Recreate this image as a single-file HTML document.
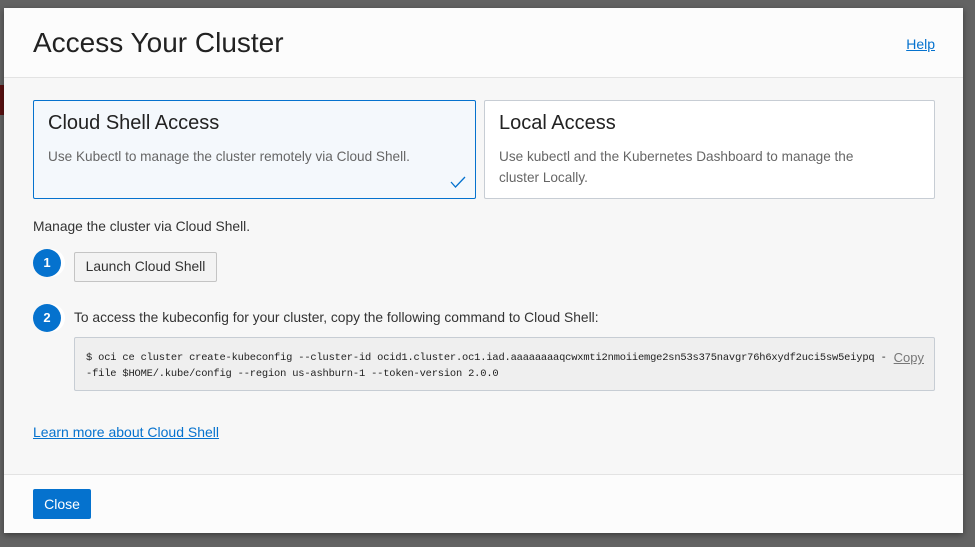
<!DOCTYPE html>
<html><head><style>
*{box-sizing:border-box;margin:0;padding:0}
body{width:975px;height:547px;background:#636363;font-family:"Liberation Sans",sans-serif;position:relative;overflow:hidden}
.bgred{position:absolute;left:0;top:85px;width:5px;height:30px;background:#5a1010}
.modal{position:absolute;left:4px;top:8px;width:959px;height:525px;background:#f7f7f7;box-shadow:0 2px 6px rgba(0,0,0,.4)}
.hdr{height:70px;background:#fcfcfc;border-bottom:1px solid #e3e3e3;position:relative}
.hdr h1{position:absolute;left:29px;top:19px;font-weight:normal;font-size:28px;color:#222;letter-spacing:0}
.help{position:absolute;right:28px;top:28px;font-size:14px;color:#0572ce;text-decoration:underline}
.card{position:absolute;top:92px;height:99px;width:443px;border:1px solid #c7cdd4;background:#fff;border-radius:2px}
.card.sel{left:29px;background:#f4f8fc;border-color:#0572ce}
.card.r{left:480px;width:451px}
.card h2{position:absolute;left:14px;top:11px;font-weight:normal;font-size:20px;color:#222}
.card p{position:absolute;left:14px;top:45px;font-size:13.6px;color:#666;line-height:21px;width:380px}
.chk{position:absolute;right:9px;bottom:10px}
.t{position:absolute;font-size:13.8px;color:#333}
.num{position:absolute;left:29px;width:28px;height:28px;border-radius:50%;background:#0572ce;color:#fff;font-weight:bold;font-size:13px;text-align:center;line-height:28px;box-shadow:4px 0 0 #fff}
.btn{position:absolute;left:70px;top:244px;width:143px;height:30px;border:1px solid #c4c4c4;background:#f3f3f3;font-size:13.8px;color:#333;text-align:center;line-height:28px;border-radius:2px}
.code{position:absolute;left:70px;top:329px;width:861px;height:54px;border:1px solid #c7cdd4;background:#efefef;border-radius:2px;font-family:"Liberation Mono",monospace;font-size:10.4px;color:#222;padding:12px 0 0 11px;line-height:16px;letter-spacing:-0.17px;white-space:nowrap}
.copy{position:absolute;right:10px;top:12px;font-family:"Liberation Sans",sans-serif;font-size:13px;color:#777;text-decoration:underline;letter-spacing:0}
.learn{position:absolute;left:29px;top:416px;font-size:14px;color:#0572ce;text-decoration:underline}
.ftr{position:absolute;left:0;top:466px;width:959px;height:59px;background:#fcfcfc;border-top:1px solid #e3e3e3}
.close{position:absolute;left:29px;top:14px;width:58px;height:30px;background:#0572ce;color:#fff;font-size:14px;text-align:center;line-height:30px;border-radius:2px}
</style></head><body>
<div class="bgred"></div>
<div class="modal">
<div class="hdr"><h1>Access Your Cluster</h1><span class="help">Help</span></div>
<div class="card sel"><h2>Cloud Shell Access</h2><p style="width:420px">Use Kubectl to manage the cluster remotely via Cloud Shell.</p>
<svg class="chk" width="16" height="12" viewBox="0 0 16 12"><path d="M1 6l4.5 5L15 1" fill="none" stroke="#0572ce" stroke-width="1.3"/></svg></div>
<div class="card r"><h2>Local Access</h2><p>Use kubectl and the Kubernetes Dashboard to manage the<br>cluster Locally.</p></div>
<div class="t" style="left:29px;top:211px">Manage the cluster via Cloud Shell.</div>
<div class="num" style="top:241px">1</div>
<div class="btn">Launch Cloud Shell</div>
<div class="num" style="top:296px">2</div>
<div class="t" style="left:70px;top:302px">To access the kubeconfig for your cluster, copy the following command to Cloud Shell:</div>
<div class="code">$ oci ce cluster create-kubeconfig --cluster-id ocid1.cluster.oc1.iad.aaaaaaaaqcwxmti2nmoiiemge2sn53s375navgr76h6xydf2uci5sw5eiypq -<br>-file $HOME/.kube/config --region us-ashburn-1 --token-version 2.0.0<span class="copy">Copy</span></div>
<div class="learn">Learn more about Cloud Shell</div>
<div class="ftr"><div class="close">Close</div></div>
</div>
</body></html>
